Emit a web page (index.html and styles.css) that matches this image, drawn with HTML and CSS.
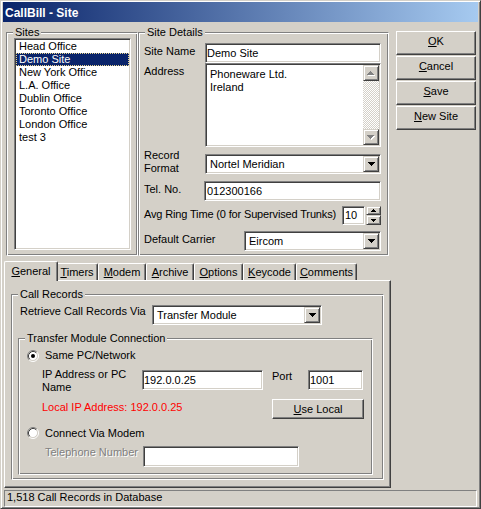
FILE: index.html
```html
<!DOCTYPE html>
<html>
<head>
<meta charset="utf-8">
<title>CallBill - Site</title>
<link rel="stylesheet" href="styles.css">
</head>
<body>
<div class="window">
  <div class="titlebar">CallBill - Site</div>
  <div class="client">
    <div class="top">
      <fieldset class="group sites">
        <legend>Sites</legend>
        <div class="listbox">
          <div class="item">Head Office</div>
          <div class="item sel">Demo Site</div>
          <div class="item">New York Office</div>
          <div class="item">L.A. Office</div>
          <div class="item">Dublin Office</div>
          <div class="item">Toronto Office</div>
          <div class="item">London Office</div>
          <div class="item">test 3</div>
        </div>
      </fieldset>
      <fieldset class="group details">
        <legend>Site Details</legend>
        <div class="dbody">
          <div class="drow r-name">
            <span class="lbl">Site Name</span>
            <div class="field edit full">Demo Site</div>
          </div>
          <div class="drow r-addr">
            <span class="lbl">Address</span>
            <div class="field memo">
              <div class="memo-text">Phoneware Ltd.<br>Ireland</div>
              <div class="vscroll">
                <div class="raised sbtn"><svg width="8" height="5" viewBox="0 0 8 5" shape-rendering="crispEdges"><path transform="translate(1 1)" fill="#fff" d="M3 0h1v1h1v1h1v1h1v1h-7v-1h1v-1h1v-1h1z"/><path fill="#808080" d="M3 0h1v1h1v1h1v1h1v1h-7v-1h1v-1h1v-1h1z"/></svg></div>
                <div class="track"></div>
                <div class="raised sbtn"><svg width="8" height="5" viewBox="0 0 8 5" shape-rendering="crispEdges"><path transform="translate(1 1)" fill="#fff" d="M0 0h7v1h-1v1h-1v1h-1v1h-1v-1h-1v-1h-1v-1h-1z"/><path fill="#808080" d="M0 0h7v1h-1v1h-1v1h-1v1h-1v-1h-1v-1h-1v-1h-1z"/></svg></div>
              </div>
            </div>
          </div>
          <div class="drow r-fmt">
            <span class="lbl">Record<br>Format</span>
            <div class="field combo full">
              <span class="val">Nortel Meridian</span>
              <span class="raised dd"><svg width="7" height="4" viewBox="0 0 7 4" shape-rendering="crispEdges"><path d="M0 0h7v1h-1v1h-1v1h-1v1h-1v-1h-1v-1h-1v-1h-1z"/></svg></span>
            </div>
          </div>
          <div class="drow r-tel">
            <span class="lbl">Tel. No.</span>
            <div class="field edit tel">012300166</div>
          </div>
          <div class="drow r-avg">
            <span class="lbl-auto avg">Avg Ring Time (0 for Supervised Trunks)</span>
            <div class="field edit spin-edit">10</div>
            <div class="spinner">
              <span class="raised spb spb-up"><svg width="5" height="3" viewBox="0 0 5 3" shape-rendering="crispEdges"><path d="M2 0h1v1h1v1h1v1h-5v-1h1v-1h1z"/></svg></span>
              <span class="raised spb spb-dn"><svg width="5" height="3" viewBox="0 0 5 3" shape-rendering="crispEdges"><path d="M0 0h5v1h-1v1h-1v1h-1v-1h-1v-1h-1z"/></svg></span>
            </div>
          </div>
          <div class="drow r-car">
            <span class="lbl-auto">Default Carrier</span>
            <div class="field combo carrier">
              <span class="val">Eircom</span>
              <span class="raised dd"><svg width="7" height="4" viewBox="0 0 7 4" shape-rendering="crispEdges"><path d="M0 0h7v1h-1v1h-1v1h-1v1h-1v-1h-1v-1h-1v-1h-1z"/></svg></span>
            </div>
          </div>
        </div>
      </fieldset>
      <div class="buttons">
        <div class="btn"><u>O</u>K</div>
        <div class="btn"><u>C</u>ancel</div>
        <div class="btn"><u>S</u>ave</div>
        <div class="btn"><u>N</u>ew Site</div>
      </div>
    </div>

    <div class="tabarea">
      <div class="tabs">
        <div class="tab active t-gen"><u>G</u>eneral</div>
        <div class="tab t-tim"><u>T</u>imers</div>
        <div class="tab t-mod"><u>M</u>odem</div>
        <div class="tab t-arc"><u>A</u>rchive</div>
        <div class="tab t-opt"><u>O</u>ptions</div>
        <div class="tab t-key"><u>K</u>eycode</div>
        <div class="tab t-com"><u>C</u>omments</div>
      </div>
      <div class="panel">
        <fieldset class="group callrec">
          <legend>Call Records</legend>
          <div class="crow">
            <span class="clbl">Retrieve Call Records Via</span>
            <div class="field combo via">
              <span class="val">Transfer Module</span>
              <span class="raised dd"><svg width="7" height="4" viewBox="0 0 7 4" shape-rendering="crispEdges"><path d="M0 0h7v1h-1v1h-1v1h-1v1h-1v-1h-1v-1h-1v-1h-1z"/></svg></span>
            </div>
          </div>
          <fieldset class="group tmc">
            <legend>Transfer Module Connection</legend>
            <div class="trow t-radio1">
              <svg class="radio" width="12" height="12" viewBox="0 0 12 12"><circle cx="6" cy="6" r="4.5" fill="#fff"/><path d="M2.11 9.89A5.5 5.5 0 0 1 9.89 2.11" stroke="#808080" fill="none"/><path d="M9.89 2.11A5.5 5.5 0 0 1 2.11 9.89" stroke="#fff" fill="none"/><path d="M2.82 9.18A4.5 4.5 0 0 1 9.18 2.82" stroke="#404040" fill="none"/><path d="M9.18 2.82A4.5 4.5 0 0 1 2.82 9.18" stroke="#D4D0C8" fill="none"/><circle cx="6" cy="6" r="2" fill="#000"/></svg>
              <span class="rtext">Same PC/Network</span>
            </div>
            <div class="trow t-ip">
              <span class="iplbl">IP Address or PC<br>Name</span>
              <div class="field edit ip">192.0.0.25</div>
              <span class="portlbl">Port</span>
              <div class="field edit port">1001</div>
            </div>
            <div class="trow t-local">
              <span class="red">Local IP Address: 192.0.0.25</span>
              <div class="btn uselocal"><u>U</u>se Local</div>
            </div>
            <div class="trow t-radio2">
              <svg class="radio" width="12" height="12" viewBox="0 0 12 12"><circle cx="6" cy="6" r="4.5" fill="#fff"/><path d="M2.11 9.89A5.5 5.5 0 0 1 9.89 2.11" stroke="#808080" fill="none"/><path d="M9.89 2.11A5.5 5.5 0 0 1 2.11 9.89" stroke="#fff" fill="none"/><path d="M2.82 9.18A4.5 4.5 0 0 1 9.18 2.82" stroke="#404040" fill="none"/><path d="M9.18 2.82A4.5 4.5 0 0 1 2.82 9.18" stroke="#D4D0C8" fill="none"/></svg>
              <span class="rtext">Connect Via Modem</span>
            </div>
            <div class="trow t-tel">
              <span class="dis">Telephone Number</span>
              <div class="field edit phone"></div>
            </div>
          </fieldset>
        </fieldset>
      </div>
    </div>

    <div class="status">1,518 Call Records in Database</div>
  </div>
</div>
</body>
</html>
```

FILE: styles.css
```css
* { box-sizing: border-box; }

body {
  margin: 0;
  background: #D4D0C8;
  color: #000;
  font-family: "Liberation Sans", Arial, sans-serif;
  font-size: 11px;
  line-height: 13px;
}

u { text-decoration: underline; text-underline-offset: 1px; }

.window {
  width: 481px;
  height: 509px;
  border: 1px solid;
  border-color: #D4D0C8 #404040 #404040 #D4D0C8;
  box-shadow: inset 1px 1px #fff, inset -1px -1px #808080;
  padding: 1px 2px 1px 2px;
  background: #D4D0C8;
  display: flex;
  flex-direction: column;
}

.titlebar {
  height: 20px;
  flex: none;
  background: linear-gradient(90deg, #0A246A, #A6CAF0);
  color: #fff;
  font-weight: bold;
  font-size: 12px;
  line-height: 18px;
  padding: 2px 0 0 2px;
  white-space: nowrap;
}

.client {
  flex: 1;
  display: flex;
  flex-direction: column;
}

/* ---------- group boxes ---------- */
.group {
  margin: 0;
  padding: 0;
  min-width: 0;
  border: 1px solid;
  border-color: #808080 #fff #fff #808080;
  box-shadow: inset 1px 1px #fff, inset -1px -1px #808080;
}
.group > legend {
  margin-left: 6px;
  padding: 0 2px;
  line-height: 13px;
  background: #D4D0C8;
  white-space: nowrap;
}

/* ---------- sunken fields / raised buttons ---------- */
.field {
  background: #fff;
  border: 1px solid;
  border-color: #808080 #fff #fff #808080;
  box-shadow: inset 1px 1px #404040, inset -1px -1px #D4D0C8;
  flex: none;
  white-space: nowrap;
  overflow: hidden;
}
.edit {
  height: 20px;
  padding: 3px 2px 0 2px;
}
.raised {
  background: #D4D0C8;
  border: 1px solid;
  border-color: #D4D0C8 #404040 #404040 #D4D0C8;
  box-shadow: inset 1px 1px #fff, inset -1px -1px #808080;
  display: flex;
  align-items: center;
  justify-content: center;
}
.raised svg { display: block; }

.combo {
  display: flex;
  height: 20px;
  padding: 1px;
}
.combo .val {
  flex: 1;
  padding: 2px 0 0 3px;
  overflow: hidden;
}
.combo .dd {
  width: 16px;
  height: 16px;
  flex: none;
}

.btn {
  background: #D4D0C8;
  border: 1px solid;
  border-color: #fff #404040 #404040 #fff;
  box-shadow: inset -1px -1px #808080;
  text-align: center;
  padding-top: 3px;
  white-space: nowrap;
}

/* ---------- top area ---------- */
.top {
  display: flex;
  align-items: flex-start;
  margin-top: 4px;
  padding-left: 3px;
  flex: none;
}

.sites {
  width: 132px;
  height: 230px;
  flex: none;
}
.listbox {
  width: 117px;
  height: 212px;
  margin: -1px 0 0 7px;
  background: #fff;
  border: 1px solid;
  border-color: #808080 #fff #fff #808080;
  box-shadow: inset 1px 1px #404040, inset -1px -1px #D4D0C8;
  padding: 1px;
}
.item {
  height: 13px;
  padding-left: 3px;
  white-space: nowrap;
}
.item.sel {
  background: #0A246A;
  color: #fff;
  outline: 1px dotted #E8D48C;
  outline-offset: -1px;
}

.details {
  width: 251px;
  height: 230px;
  flex: none;
}
.dbody {
  padding: 0 7px 0 5px;
  display: flex;
  flex-direction: column;
}
.drow {
  display: flex;
  align-items: flex-start;
}
.lbl {
  width: 61px;
  flex: none;
  margin-top: 2px;
}
.lbl-auto {
  flex: none;
  white-space: nowrap;
}
.avg { letter-spacing: -0.15px; }
.full { width: 176px; }

.r-name { margin-top: 4px; height: 20px; }
.r-name .edit { padding-left: 1px; }

.r-addr { height: 84px; }
.memo {
  width: 176px;
  height: 84px;
  display: flex;
  padding: 1px;
}
.memo-text {
  flex: 1;
  padding: 3px 3px 0 3px;
  white-space: nowrap;
}
.vscroll {
  width: 16px;
  display: flex;
  flex-direction: column;
}
.sbtn { height: 16px; flex: none; }
.track {
  flex: 1;
  background-color: #fff;
  background-image: conic-gradient(#D4D0C8 25%, #fff 0 50%, #D4D0C8 0 75%, #fff 0);
  background-size: 2px 2px;
}

.r-fmt { height: 34px; }
.r-fmt .combo { margin-top: 7px; }

.r-tel { height: 20px; }
.tel { width: 177px; margin-left: -1px; }

.r-avg { height: 29px; }
.r-avg .lbl-auto { margin-top: 7px; }
.spin-edit {
  width: 23px;
  height: 19px;
  margin: 5px 0 0 auto;
  padding: 2px 0 0 2px;
}
.spinner {
  width: 15px;
  height: 19px;
  margin: 5px 0 0 1px;
  display: flex;
  flex-direction: column;
  flex: none;
}
.spb-up { height: 9px; }
.spb-dn { height: 10px; }

.r-car .lbl-auto { margin-top: 3px; }
.carrier {
  width: 137px;
  margin: 1px 0 0 auto;
}

.buttons {
  width: 80px;
  margin: 5px 0 0 7px;
  flex: none;
}
.buttons .btn {
  height: 24px;
  margin-bottom: 1px;
}

/* ---------- tabs ---------- */
.tabarea {
  margin-left: 1px;
  flex: none;
}
.tabs {
  display: flex;
  align-items: flex-end;
  height: 19px;
  margin-top: 5px;
  padding-left: 2px;
  position: relative;
  z-index: 1;
}
.tab {
  height: 17px;
  flex: none;
  background: #D4D0C8;
  border: 1px solid #fff;
  border-right-color: #404040;
  border-bottom: none;
  border-radius: 2px 2px 0 0;
  box-shadow: inset -1px 0 #808080;
  padding-top: 2px;
  text-align: center;
  white-space: nowrap;
  position: relative;
}
.tab.active {
  height: 20px;
  margin: 0 -2px -1px -2px;
  padding-top: 3px;
  z-index: 2;
}
.t-gen { width: 54px; }
.t-tim { width: 42px; }
.t-mod { width: 48px; }
.t-arc { width: 48px; }
.t-opt { width: 49px; }
.t-key { width: 53px; }
.t-com { width: 61px; }

.panel {
  width: 387px;
  height: 208px;
  border: 1px solid;
  border-color: #fff #404040 #404040 #fff;
  box-shadow: inset -1px -1px #808080;
  padding: 0;
}

.callrec {
  width: 373px;
  height: 192px;
  margin: 7px 0 0 6px;
}
.crow {
  display: flex;
  align-items: flex-start;
  margin: 4px 0 0 8px;
}
.clbl {
  width: 132px;
  flex: none;
}
.via { width: 170px; }

.tmc {
  width: 355px;
  height: 143px;
  margin: 7px 0 0 6px;
}
.trow {
  display: flex;
  align-items: flex-start;
}
.radio { display: block; flex: none; }
.rtext { margin-left: 6px; white-space: nowrap; }

.t-radio1 { margin-top: 4px; padding-left: 8px; }
.t-radio1 .radio { margin-top: 1px; }

.t-ip { margin-top: 6px; padding-left: 23px; }
.iplbl { width: 100px; flex: none; }
.ip { width: 121px; margin-top: 2px; padding-left: 1px; }
.portlbl { width: 36px; margin: 2px 0 0 9px; flex: none; }
.port { width: 55px; margin-top: 2px; padding-left: 1px; }

.t-local { margin-top: 5px; padding-left: 23px; }
.red {
  width: 230px;
  flex: none;
  margin-top: 2px;
  color: #FF0000;
  white-space: nowrap;
}
.uselocal { width: 92px; height: 20px; }

.t-radio2 { margin-top: 8px; padding-left: 8px; }
.t-radio2 .radio { margin-top: 0; }

.t-tel { margin-top: 6px; padding-left: 26px; }
.dis {
  width: 98px;
  flex: none;
  color: #808080;
  text-shadow: 1px 1px 0 #fff;
  white-space: nowrap;
}
.phone { width: 156px; height: 21px; }

/* ---------- status bar ---------- */
.status {
  height: 17px;
  width: 473px;
  margin: 2px 0 0 1px;
  border: 1px solid;
  border-color: #808080 #fff #fff #808080;
  padding: 0 0 0 2px;
  white-space: nowrap;
  flex: none;
}
```
